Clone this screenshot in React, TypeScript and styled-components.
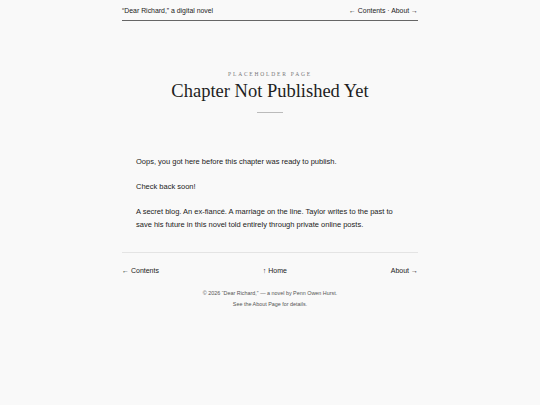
import React from 'react';
import styled, { createGlobalStyle } from 'styled-components';

const GlobalStyle = createGlobalStyle`
  html, body {
    margin: 0;
    padding: 0;
    background: #f9f9f9;
  }
  body {
    font-family: "Liberation Sans", Arial, sans-serif;
    color: #222;
  }
`;

const Page = styled.div`
  width: 296px;
  margin: 0 auto;
`;

const Header = styled.header`
  display: flex;
  justify-content: space-between;
  align-items: center;
  height: 20px;
  border-bottom: 1px solid #666;
  font-size: 6.9px;
  color: #222;
`;

const NavLink = styled.a`
  color: inherit;
  text-decoration: none;
`;

const Hero = styled.div`
  text-align: center;
  padding-top: 50px;
`;

const Kicker = styled.div`
  font-family: "Liberation Serif", "Times New Roman", serif;
  font-size: 5.5px;
  letter-spacing: 1.8px;
  color: #777;
  text-transform: uppercase;
`;

const Title = styled.h1`
  font-family: "Liberation Serif", "Times New Roman", serif;
  font-weight: normal;
  font-size: 18.5px;
  margin: 4px 0 0;
  color: #1e1e1e;
`;

const Rule = styled.div`
  width: 26px;
  height: 1px;
  background: #bbb;
  margin: 10px auto 0;
`;

const Body = styled.div`
  padding: 42px 14px 0;
`;

const Para = styled.p`
  font-size: 7.5px;
  line-height: 13px;
  margin: 0 0 12px;
`;

const Footer = styled.footer`
  margin-top: 21px;
  border-top: 1px solid #e4e4e4;
`;

const FooterNav = styled.nav`
  display: flex;
  justify-content: space-between;
  align-items: center;
  padding-top: 14px;
  font-size: 7px;
`;

const Copy = styled.p<{ $first?: boolean }>`
  text-align: center;
  font-size: 5.4px;
  color: #555;
  margin: ${p => (p.$first ? '16px 0 0' : '5px 0 0')};
`;

const App: React.FC = () => (
  <>
    <GlobalStyle />
    <Page>
      <Header>
        <span>“Dear Richard,” a digital novel</span>
        <span>
          <NavLink href="#">← Contents</NavLink> · <NavLink href="#">About →</NavLink>
        </span>
      </Header>

      <Hero>
        <Kicker>Placeholder Page</Kicker>
        <Title>Chapter Not Published Yet</Title>
        <Rule />
      </Hero>

      <Body>
        <Para>Oops, you got here before this chapter was ready to publish.</Para>
        <Para>Check back soon!</Para>
        <Para>
          A secret blog. An ex-fiancé. A marriage on the line. Taylor writes to the past to
          save his future in this novel told entirely through private online posts.
        </Para>
      </Body>

      <Footer>
        <FooterNav>
          <NavLink href="#">← Contents</NavLink>
          <NavLink href="#">↑ Home</NavLink>
          <NavLink href="#">About →</NavLink>
        </FooterNav>
        <Copy $first>© 2026 “Dear Richard,” — a novel by Penn Owen Hurst.</Copy>
        <Copy>See the About Page for details.</Copy>
      </Footer>
    </Page>
  </>
);

export default App;
